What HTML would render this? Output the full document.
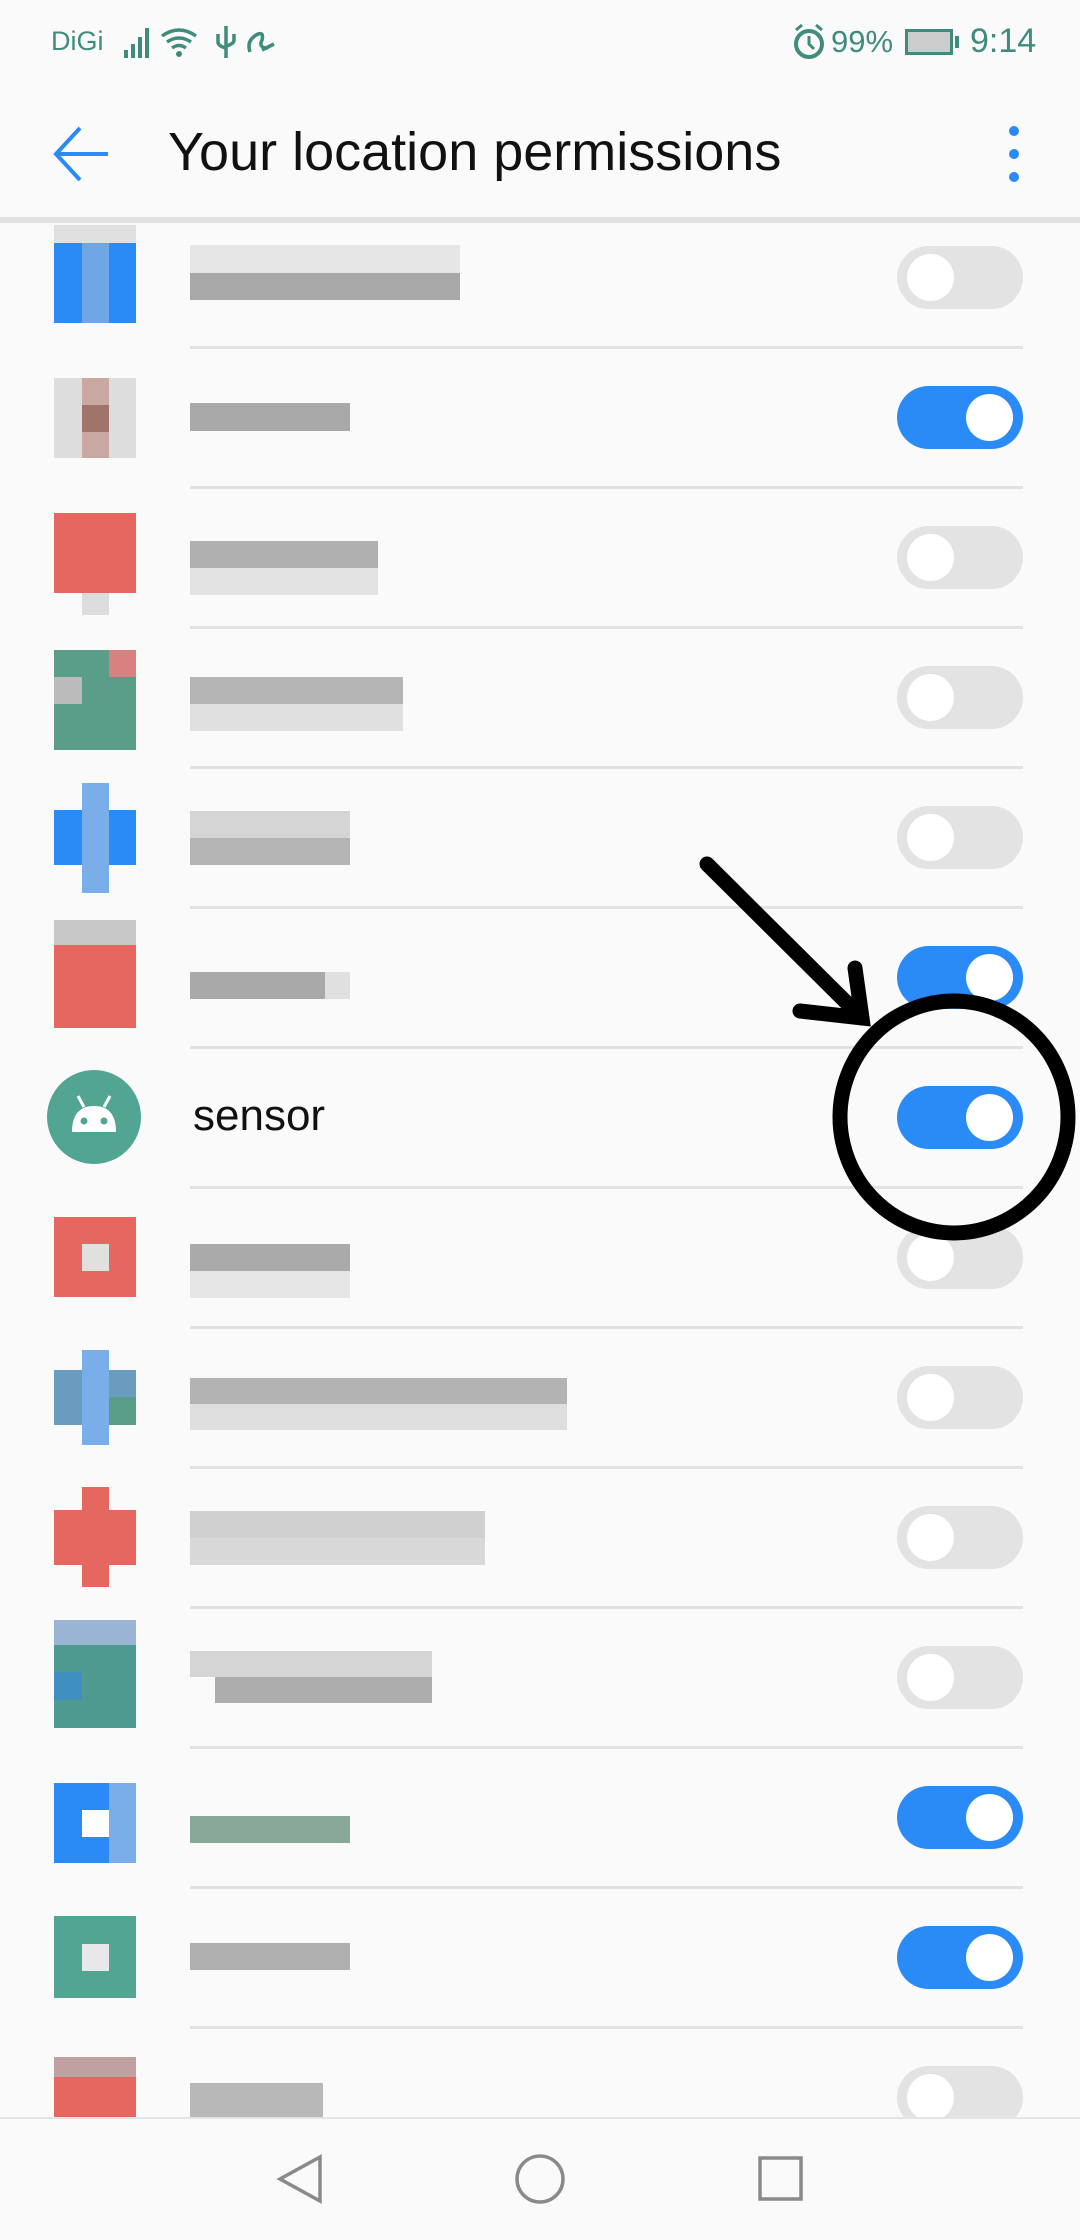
<!DOCTYPE html>
<html><head><meta charset="utf-8"><style>
*{margin:0;padding:0;box-sizing:border-box}
body{width:1080px;height:2240px;background:#fafafa;position:relative;overflow:hidden;font-family:"Liberation Sans",sans-serif}
.a{position:absolute}
.sep{position:absolute;left:190px;width:833px;height:3px;background:#e2e2e2}
.tg{position:absolute;left:897px;width:126px;height:63px;border-radius:32px;background:#e3e3e3}
.tg::after{content:"";position:absolute;top:8px;left:10px;width:47px;height:47px;border-radius:50%;background:#fff}
.tg.on{background:#2a8af6}
.tg.on::after{left:auto;right:10px}
.st{color:#3f8c7c;font-size:27px}
</style></head><body>
<div class="a st" style="left:51px;top:26px">DiGi</div>
<svg class="a" style="left:122px;top:22px" width="170" height="40" viewBox="0 0 170 40">
<g fill="#3f8c7c"><rect x="2" y="28" width="4" height="8"/><rect x="9" y="22" width="4" height="14"/><rect x="16" y="15" width="4" height="21"/><rect x="23" y="6" width="4" height="30"/></g>
<g fill="none" stroke="#3f8c7c" stroke-width="3.5"><path d="M40 14 Q57 2 74 14"/><path d="M45 20 Q57 12 69 20"/><path d="M50 26 Q57 21 64 26"/>
<path d="M104 4 V36 M96 12 V20 Q96 24 104 26 M112 12 V18 Q112 22 104 24"/>
<path d="M128 30 Q124 18 136 12 Q142 10 140 18 Q136 26 146 26 M140 28 L152 22"/></g>
<circle cx="57" cy="32" r="3" fill="#3f8c7c"/></svg>
<svg class="a" style="left:792px;top:22px" width="34" height="40" viewBox="0 0 34 40"><circle cx="17" cy="22" r="13" fill="none" stroke="#3f8c7c" stroke-width="4"/><path d="M17 14 V22 L22 27" stroke="#3f8c7c" stroke-width="3" fill="none"/><path d="M4 8 L10 3 M30 8 L24 3" stroke="#3f8c7c" stroke-width="3"/></svg>
<div class="a st" style="left:831px;top:24px;font-size:31px">99%</div>
<div class="a" style="left:905px;top:29px;width:48px;height:26px;border:3px solid #3f8c7c;background:#ccc"></div>
<div class="a" style="left:955px;top:36px;width:4px;height:12px;background:#3f8c7c"></div>
<div class="a st" style="left:970px;top:22px;font-size:34px">9:14</div>
<svg class="a" style="left:52px;top:124px" width="60" height="60" viewBox="0 0 60 60"><path d="M56 30 H4 M28 4 L4 30 L28 56" fill="none" stroke="#2a8af6" stroke-width="4"/></svg>
<div class="a" style="left:168px;top:121px;font-size:54px;color:#111">Your location permissions</div>
<div class="a" style="left:1009px;top:126px;width:10px;height:10px;border-radius:5px;background:#2a8af6"></div>
<div class="a" style="left:1009px;top:149px;width:10px;height:10px;border-radius:5px;background:#2a8af6"></div>
<div class="a" style="left:1009px;top:172px;width:10px;height:10px;border-radius:5px;background:#2a8af6"></div>
<div class="a" style="left:0;top:217px;width:1080px;height:6px;background:#e2e2e2"></div>

<div class="a" style="left:54px;top:243px;width:82px;height:80px;background:#2a8af6"></div>
<div class="a" style="left:82px;top:243px;width:27px;height:80px;background:#6fa6e8"></div>
<div class="a" style="left:54px;top:225px;width:82px;height:18px;background:#e0e0e0"></div>
<div class="a" style="left:190px;top:245px;width:270px;height:28px;background:#e6e6e6"></div>
<div class="a" style="left:190px;top:273px;width:270px;height:27px;background:#a8a8a8"></div>
<div class="tg" style="top:246px"></div>
<div class="sep" style="top:346px"></div>
<div class="a" style="left:54px;top:378px;width:82px;height:80px;background:#ddd"></div>
<div class="a" style="left:82px;top:378px;width:27px;height:80px;background:#c9a8a2"></div>
<div class="a" style="left:82px;top:405px;width:27px;height:27px;background:#a07468"></div>
<div class="a" style="left:190px;top:403px;width:160px;height:28px;background:#a9a9a9"></div>
<div class="tg on" style="top:386px"></div>
<div class="sep" style="top:486px"></div>
<div class="a" style="left:54px;top:513px;width:82px;height:80px;background:#e5675f"></div>
<div class="a" style="left:82px;top:593px;width:27px;height:22px;background:#ddd"></div>
<div class="a" style="left:190px;top:541px;width:188px;height:27px;background:#b0b0b0"></div>
<div class="a" style="left:190px;top:568px;width:188px;height:27px;background:#e3e3e3"></div>
<div class="tg" style="top:526px"></div>
<div class="sep" style="top:626px"></div>
<div class="a" style="left:54px;top:650px;width:82px;height:100px;background:#5a9e8a"></div>
<div class="a" style="left:109px;top:650px;width:27px;height:27px;background:#d98080"></div>
<div class="a" style="left:54px;top:677px;width:28px;height:27px;background:#bbb"></div>
<div class="a" style="left:190px;top:677px;width:213px;height:27px;background:#b5b5b5"></div>
<div class="a" style="left:190px;top:704px;width:213px;height:27px;background:#e0e0e0"></div>
<div class="tg" style="top:666px"></div>
<div class="sep" style="top:766px"></div>
<div class="a" style="left:54px;top:810px;width:82px;height:55px;background:#2a8af6"></div>
<div class="a" style="left:82px;top:783px;width:27px;height:110px;background:#7aaee8"></div>
<div class="a" style="left:190px;top:811px;width:160px;height:27px;background:#d5d5d5"></div>
<div class="a" style="left:190px;top:838px;width:160px;height:27px;background:#b5b5b5"></div>
<div class="tg" style="top:806px"></div>
<div class="sep" style="top:906px"></div>
<div class="a" style="left:54px;top:920px;width:82px;height:108px;background:#e5675f"></div>
<div class="a" style="left:54px;top:920px;width:82px;height:25px;background:#c8c8c8"></div>
<div class="a" style="left:190px;top:972px;width:135px;height:27px;background:#a9a9a9"></div>
<div class="a" style="left:325px;top:972px;width:25px;height:27px;background:#e0e0e0"></div>
<div class="tg on" style="top:946px"></div>
<div class="sep" style="top:1046px"></div>
<div class="a" style="left:47px;top:1070px;width:94px;height:94px;border-radius:50%;background:#52a592"></div>
<svg class="a" style="left:64px;top:1092px" width="60" height="44" viewBox="0 0 60 44"><path d="M8 40 Q8 14 30 14 Q52 14 52 40 Z" fill="#fff"/><path d="M14 4 L20 15 M46 4 L40 15" stroke="#fff" stroke-width="3"/><circle cx="20" cy="29" r="3.5" fill="#52a592"/><circle cx="40" cy="29" r="3.5" fill="#52a592"/></svg>
<div class="a" style="left:193px;top:1091px;font-size:44px;color:#111">sensor</div>
<div class="tg on" style="top:1086px"></div>
<div class="sep" style="top:1186px"></div>
<div class="a" style="left:54px;top:1217px;width:82px;height:80px;background:#e5675f"></div>
<div class="a" style="left:82px;top:1244px;width:27px;height:27px;background:#e0e0e0"></div>
<div class="a" style="left:190px;top:1244px;width:160px;height:27px;background:#aaa"></div>
<div class="a" style="left:190px;top:1271px;width:160px;height:27px;background:#e6e6e6"></div>
<div class="tg" style="top:1226px"></div>
<div class="sep" style="top:1326px"></div>
<div class="a" style="left:54px;top:1370px;width:82px;height:55px;background:#6a9cc0"></div>
<div class="a" style="left:82px;top:1350px;width:27px;height:95px;background:#7aaee8"></div>
<div class="a" style="left:109px;top:1397px;width:27px;height:28px;background:#5a9e8a"></div>
<div class="a" style="left:190px;top:1378px;width:377px;height:26px;background:#b3b3b3"></div>
<div class="a" style="left:190px;top:1404px;width:377px;height:26px;background:#dedede"></div>
<div class="tg" style="top:1366px"></div>
<div class="sep" style="top:1466px"></div>
<div class="a" style="left:54px;top:1510px;width:82px;height:55px;background:#e5675f"></div>
<div class="a" style="left:82px;top:1487px;width:27px;height:100px;background:#e5675f"></div>
<div class="a" style="left:190px;top:1511px;width:295px;height:27px;background:#d0d0d0"></div>
<div class="a" style="left:190px;top:1538px;width:295px;height:27px;background:#d8d8d8"></div>
<div class="tg" style="top:1506px"></div>
<div class="sep" style="top:1606px"></div>
<div class="a" style="left:54px;top:1620px;width:82px;height:108px;background:#4e9a90"></div>
<div class="a" style="left:54px;top:1620px;width:82px;height:25px;background:#9ab4d4"></div>
<div class="a" style="left:54px;top:1672px;width:28px;height:28px;background:#3f90c0"></div>
<div class="a" style="left:190px;top:1651px;width:242px;height:26px;background:#d5d5d5"></div>
<div class="a" style="left:215px;top:1677px;width:217px;height:26px;background:#adadad"></div>
<div class="tg" style="top:1646px"></div>
<div class="sep" style="top:1746px"></div>
<div class="a" style="left:54px;top:1783px;width:82px;height:80px;background:#2a8af6"></div>
<div class="a" style="left:82px;top:1810px;width:27px;height:27px;background:#fff"></div>
<div class="a" style="left:109px;top:1783px;width:27px;height:80px;background:#7aaee8"></div>
<div class="a" style="left:190px;top:1816px;width:160px;height:27px;background:#8aa898"></div>
<div class="tg on" style="top:1786px"></div>
<div class="sep" style="top:1886px"></div>
<div class="a" style="left:54px;top:1916px;width:82px;height:82px;background:#52a592"></div>
<div class="a" style="left:82px;top:1944px;width:27px;height:27px;background:#e8e8e8"></div>
<div class="a" style="left:190px;top:1943px;width:160px;height:27px;background:#b0b0b0"></div>
<div class="tg on" style="top:1926px"></div>
<div class="sep" style="top:2026px"></div>
<div class="a" style="left:54px;top:2057px;width:82px;height:60px;background:#e5675f"></div>
<div class="a" style="left:54px;top:2057px;width:82px;height:20px;background:#c0a0a0"></div>
<div class="a" style="left:190px;top:2083px;width:133px;height:34px;background:#b8b8b8"></div>
<div class="tg" style="top:2066px"></div>

<div class="a" style="left:0;top:2117px;width:1080px;height:123px;background:#fafafa;border-top:2px solid #e4e4e4"></div>
<svg class="a" style="left:0;top:2117px" width="1080" height="123" viewBox="0 0 1080 123">
<g fill="none" stroke="#8a8a8a" stroke-width="3.5"><path d="M320 40 L280 62 L320 84 Z"/><circle cx="540" cy="62" r="23"/><rect x="760" y="41" width="41" height="41"/></g></svg>

<svg class="a" style="left:0;top:0" width="1080" height="2240" viewBox="0 0 1080 2240">
<ellipse cx="954" cy="1117" rx="114" ry="116" fill="none" stroke="#000" stroke-width="15"/>
<g stroke="#000" stroke-width="15" stroke-linecap="round" fill="none"><path d="M707 864 L862 1018"/><path d="M800 1011 L862 1018 L855 968"/></g>
</svg>
</body></html>
